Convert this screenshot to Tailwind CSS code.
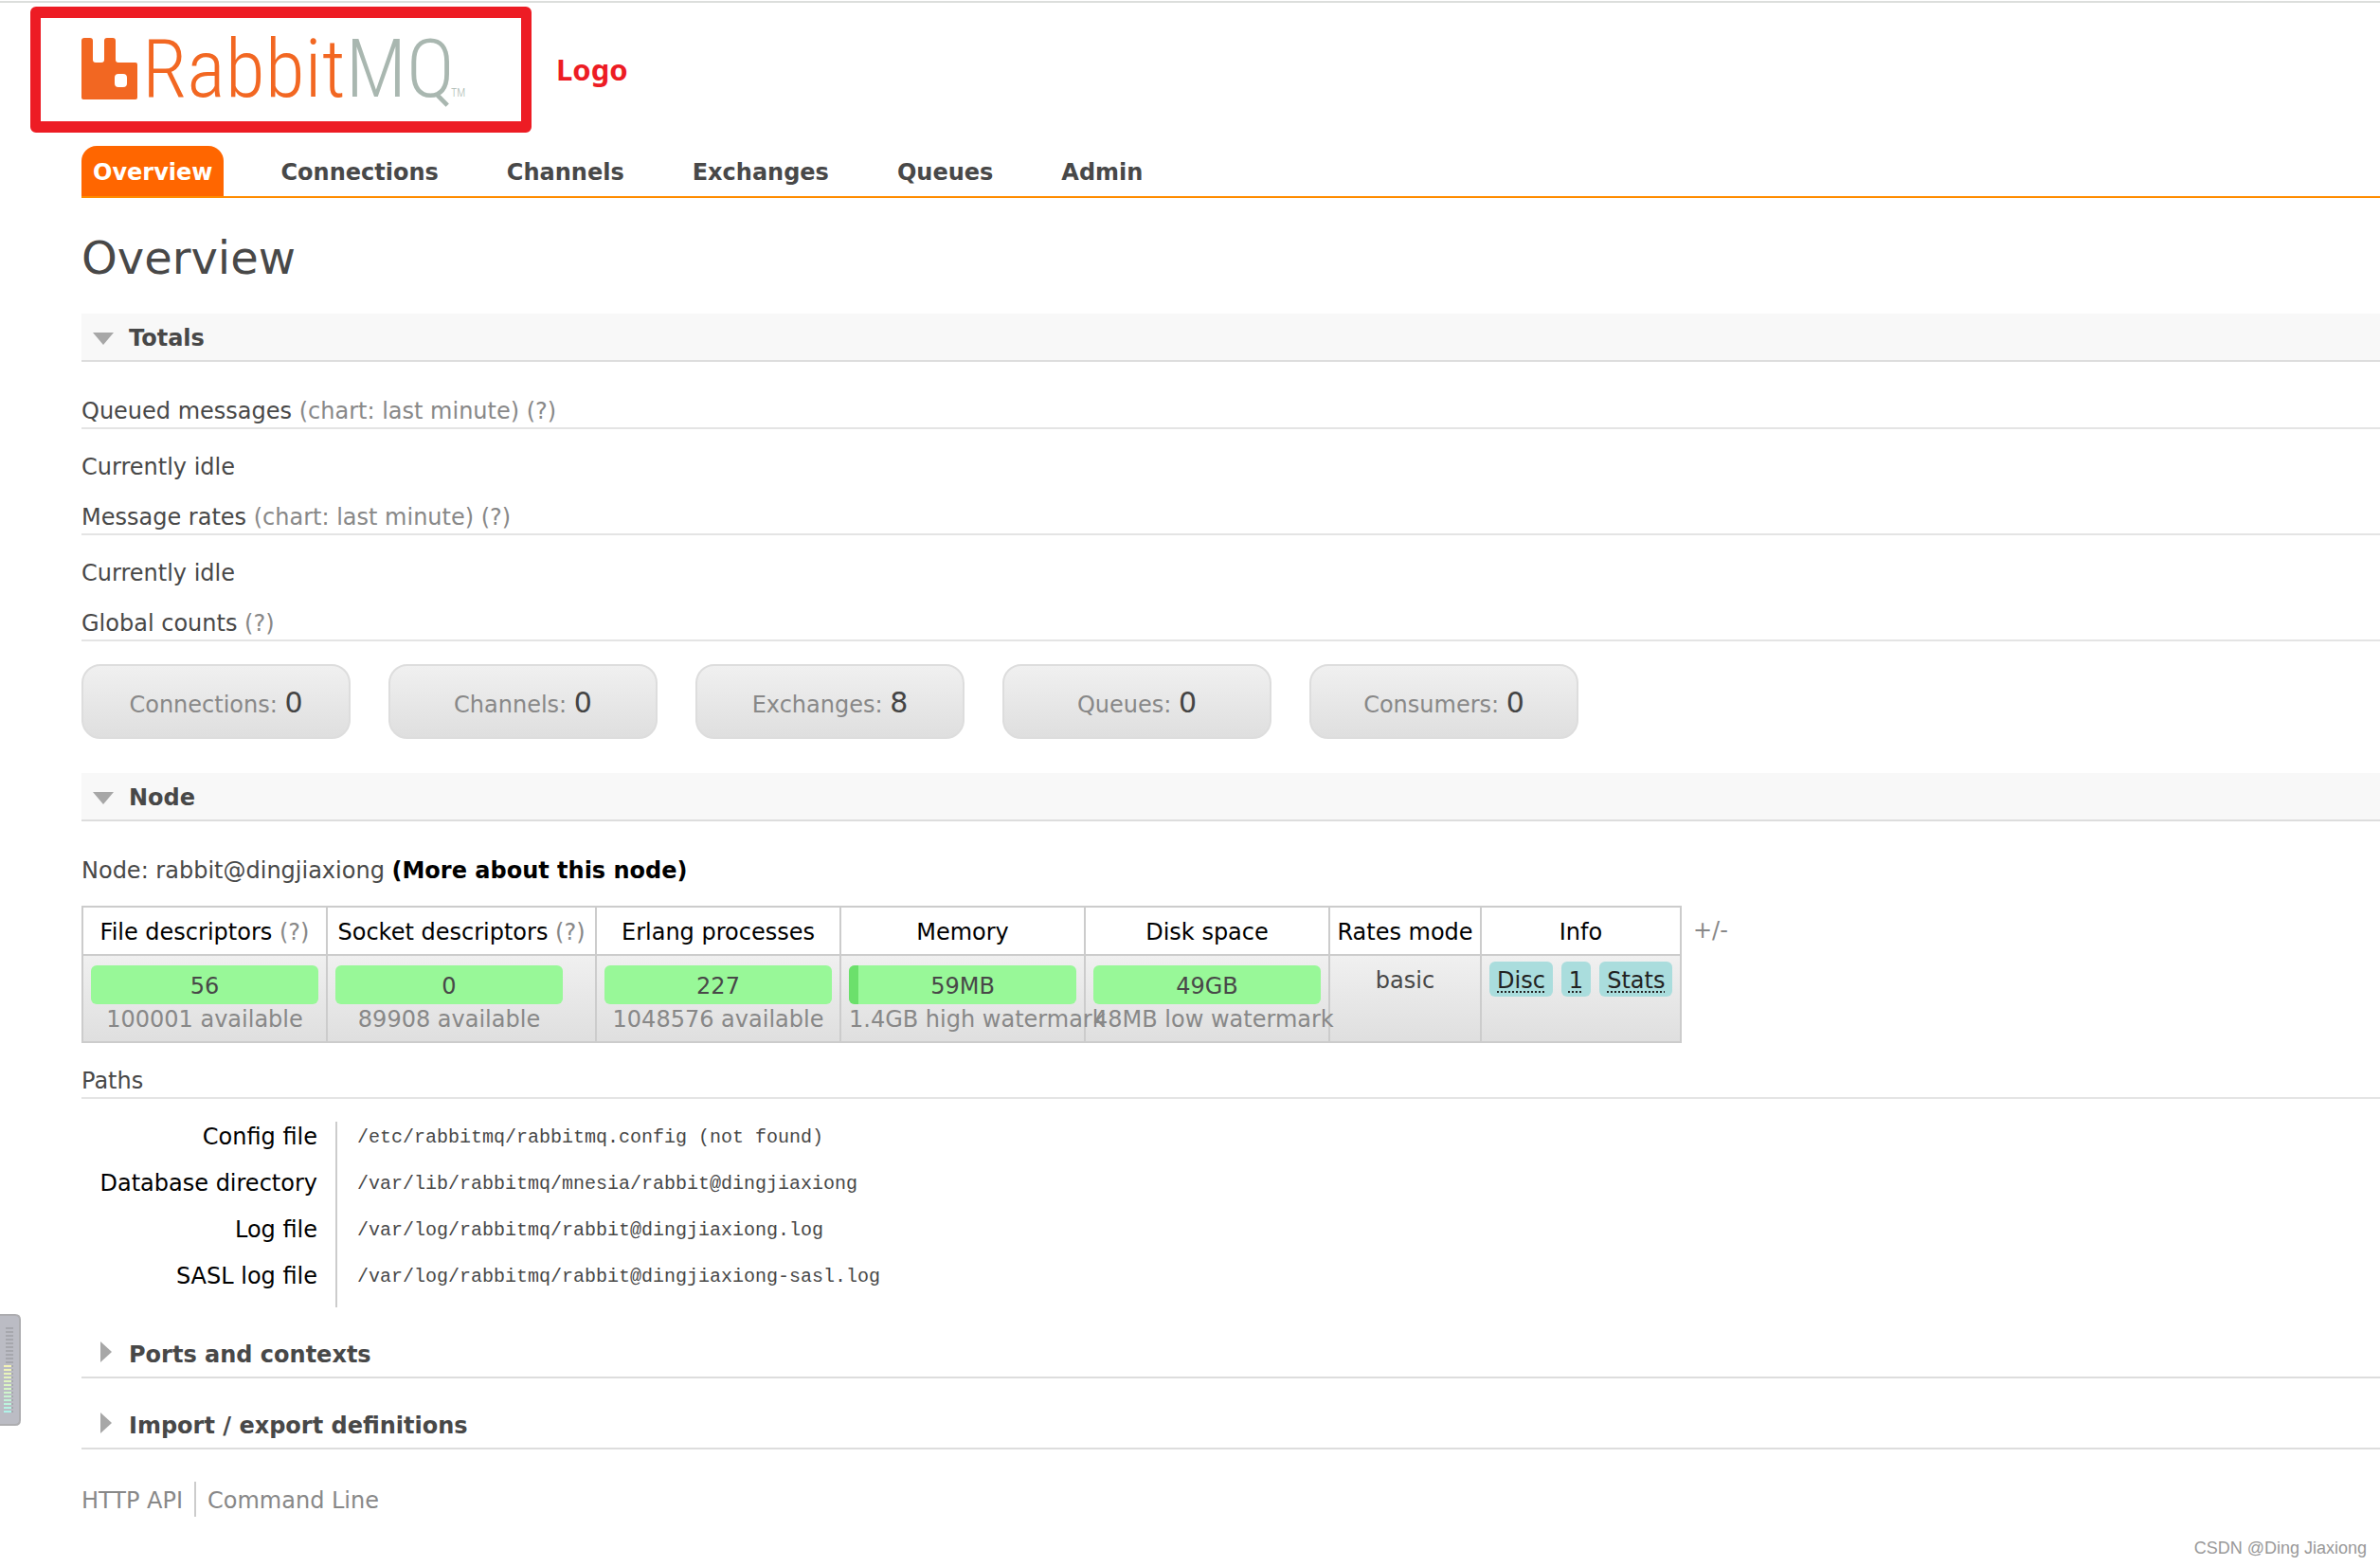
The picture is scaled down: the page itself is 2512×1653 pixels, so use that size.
<!DOCTYPE html>
<html lang="en">
<head>
<meta charset="utf-8">
<title>RabbitMQ Management</title>
<script src="https://cdn.jsdelivr.net/npm/@tailwindcss/browser@4"></script>
</head>
<body class="relative min-h-screen overflow-x-hidden bg-white pt-px font-['Verdana','DejaVu_Sans',sans-serif] text-[24px] leading-[28px] text-[#484848]">
<header class="border-t-2 border-[#dcdedc]">
  <div class="flex items-center gap-[26px] pl-8 pt-1">
    <a href="#" aria-label="RabbitMQ" class="flex h-[133px] w-[529px] rounded-md border-x-[11px] border-y-[12px] border-[#ed1c24] pl-[43px] pt-[20px]">
      <svg class="h-[84px] w-[420px] overflow-visible" viewBox="0 0 420 84">
        <path fill="#f26722" d="M0 4Q0 1 3 1H9Q12 1 12 4V24Q12 27 15 27H21Q24 27 24 24V4Q24 1 27 1H33Q36 1 36 4V24Q36 27 39 27H57Q59 27 59 29V64Q59 66 57 66H2Q0 66 0 64ZM39 39Q35 39 35 43V49Q35 53 39 53H44Q48 53 48 49V43Q48 39 44 39Z" fill-rule="evenodd"/>
        <text x="64" y="63" font-size="86" font-family="Roboto Condensed, Roboto, sans-serif" font-weight="300" fill="#f26722">Rabbit<tspan fill="#a9b7b0">MQ</tspan></text>
        <text x="390" y="63" font-size="12" font-family="Roboto Condensed, Roboto, sans-serif" font-weight="300" fill="#a9b7b0">TM</text>
      </svg>
    </a>
    <span class="pb-[2px] font-['Noto_Sans',sans-serif] text-[31px] font-bold leading-[40px] text-[#ed1c24]">Logo</span>
  </div>
  <nav class="ml-[86px] mt-[14px] flex gap-12 border-b-2 border-[#ff8c00] font-bold">
    <a href="#" class="rounded-t-2xl bg-[#ff6600] px-3 pb-[11px] pt-[14px] text-white">Overview</a>
    <a href="#" class="px-3 pb-[11px] pt-[14px]">Connections</a>
    <a href="#" class="px-3 pb-[11px] pt-[14px]">Channels</a>
    <a href="#" class="px-3 pb-[11px] pt-[14px]">Exchanges</a>
    <a href="#" class="px-3 pb-[11px] pt-[14px]">Queues</a>
    <a href="#" class="px-3 pb-[11px] pt-[14px]">Admin</a>
  </nav>
</header>

<main class="pl-[86px]">
  <h1 class="mt-[35px] text-[48px] leading-[56px]">Overview</h1>

  <section class="mt-[31px]">
    <h2><button class="flex w-full gap-4 border-b-2 border-[#dddddd] bg-[#f8f8f8] pb-[9px] pl-3 pt-3 text-left font-bold"><svg class="h-7 w-[22px]" viewBox="0 0 22 28"><path fill="#a7a7a7" d="M0 8H22L11 21Z"/></svg>Totals</button></h2>
    <h3 class="mt-[38px] border-b-2 border-[#e4e4e4] pb-[3px]">Queued messages <a href="#" class="text-[#888888]">(chart: last minute)</a> <a href="#" class="text-[#888888]">(?)</a></h3>
    <p class="mt-[26px]">Currently idle</p>
    <h3 class="mt-[25px] border-b-2 border-[#e4e4e4] pb-[3px]">Message rates <a href="#" class="text-[#888888]">(chart: last minute)</a> <a href="#" class="text-[#888888]">(?)</a></h3>
    <p class="mt-[26px]">Currently idle</p>
    <h3 class="mt-[25px] border-b-2 border-[#e4e4e4] pb-[3px]">Global counts <a href="#" class="text-[#888888]">(?)</a></h3>
    <div class="mt-6 flex gap-10 text-[#888888]">
      <div class="h-[79px] w-[284px] rounded-[20px] border-2 border-[#dddddd] bg-linear-to-b from-[#f0f0f0] to-[#dfdfdf] pt-[25px] text-center">Connections: <span class="text-[30px] text-[#444444]">0</span></div>
      <div class="h-[79px] w-[284px] rounded-[20px] border-2 border-[#dddddd] bg-linear-to-b from-[#f0f0f0] to-[#dfdfdf] pt-[25px] text-center">Channels: <span class="text-[30px] text-[#444444]">0</span></div>
      <div class="h-[79px] w-[284px] rounded-[20px] border-2 border-[#dddddd] bg-linear-to-b from-[#f0f0f0] to-[#dfdfdf] pt-[25px] text-center">Exchanges: <span class="text-[30px] text-[#444444]">8</span></div>
      <div class="h-[79px] w-[284px] rounded-[20px] border-2 border-[#dddddd] bg-linear-to-b from-[#f0f0f0] to-[#dfdfdf] pt-[25px] text-center">Queues: <span class="text-[30px] text-[#444444]">0</span></div>
      <div class="h-[79px] w-[284px] rounded-[20px] border-2 border-[#dddddd] bg-linear-to-b from-[#f0f0f0] to-[#dfdfdf] pt-[25px] text-center">Consumers: <span class="text-[30px] text-[#444444]">0</span></div>
    </div>
  </section>

  <section class="mt-9">
    <h2><button class="flex w-full gap-4 border-b-2 border-[#dddddd] bg-[#f8f8f8] pb-[9px] pl-3 pt-3 text-left font-bold"><svg class="h-7 w-[22px]" viewBox="0 0 22 28"><path fill="#a7a7a7" d="M0 8H22L11 21Z"/></svg>Node</button></h2>
    <p class="mt-[38px]">Node: rabbit@dingjiaxiong <a href="#" class="font-bold text-black">(More about this node)</a></p>
    <div class="mt-[23px] flex items-start gap-3">
      <table class="w-[1689px] table-fixed border-collapse whitespace-nowrap">
        <colgroup><col class="w-[258px]"><col class="w-[284px]"><col class="w-[258px]"><col class="w-[258px]"><col class="w-[258px]"><col class="w-[160px]"><col></colgroup>
        <thead>
          <tr class="text-black [&>th]:border-2 [&>th]:border-[#cccccc] [&>th]:pb-[9px] [&>th]:pt-3 [&>th]:font-normal">
            <th>File descriptors <a href="#" class="text-[#888888]">(?)</a></th>
            <th>Socket descriptors <a href="#" class="text-[#888888]">(?)</a></th>
            <th>Erlang processes</th><th>Memory</th><th>Disk space</th><th>Rates mode</th><th>Info</th>
          </tr>
        </thead>
        <tbody>
          <tr class="[&>td]:border-2 [&>td]:border-[#cccccc] [&>td]:bg-linear-to-b [&>td]:from-[#f0f0f0] [&>td]:to-[#dfdfdf] [&>td]:px-2 [&>td]:align-top">
            <td class="pb-[9px] pt-[10px]"><div class="w-[240px] text-center"><div class="h-[41px] rounded-md bg-[#98f898] pt-2">56</div><div class="pt-[2px] text-[#888888]">100001 available</div></div></td>
            <td class="pb-[9px] pt-[10px]"><div class="w-[240px] text-center"><div class="h-[41px] rounded-md bg-[#98f898] pt-2">0</div><div class="pt-[2px] text-[#888888]">89908 available</div></div></td>
            <td class="pb-[9px] pt-[10px]"><div class="w-[240px] text-center"><div class="h-[41px] rounded-md bg-[#98f898] pt-2">227</div><div class="pt-[2px] text-[#888888]">1048576 available</div></div></td>
            <td class="pb-[9px] pt-[10px]"><div class="w-[240px] text-center"><div class="grid h-[41px] overflow-hidden rounded-md bg-[#98f898]"><div class="col-start-1 row-start-1 bg-[#6be06b]" style="width:4.2%"></div><div class="col-start-1 row-start-1 pt-2">59MB</div></div><div class="pt-[2px] text-[#888888]">1.4GB high watermark</div></div></td>
            <td class="pb-[9px] pt-[10px]"><div class="w-[240px] text-center"><div class="h-[41px] rounded-md bg-[#98f898] pt-2">49GB</div><div class="pt-[2px] text-[#888888]">48MB low watermark</div></div></td>
            <td class="pt-3 text-center">basic</td>
            <td class="pt-[6px]"><div class="flex gap-[9px] text-[#222222]">
              <span class="rounded-md bg-[#aadddd] px-2 pb-[3px] pt-[6px]"><abbr class="underline decoration-dotted decoration-2 underline-offset-[3px]">Disc</abbr></span>
              <span class="rounded-md bg-[#aadddd] px-2 pb-[3px] pt-[6px]"><abbr class="underline decoration-dotted decoration-2 underline-offset-[3px]">1</abbr></span>
              <span class="rounded-md bg-[#aadddd] px-2 pb-[3px] pt-[6px]"><abbr class="underline decoration-dotted decoration-2 underline-offset-[3px]">Stats</abbr></span>
            </div></td>
          </tr>
        </tbody>
      </table>
      <button class="pt-3 text-[#888888]">+/-</button>
    </div>

    <h3 class="mt-[26px] border-b-2 border-[#e4e4e4] pb-[3px]">Paths</h3>
    <table class="mt-6 [&_td]:h-[49px] [&_td]:pl-[21px] [&_td]:pt-[3px] [&_td]:align-top [&_td]:font-['Liberation_Mono',monospace] [&_td]:text-[20px] [&_th]:h-[49px] [&_th]:w-[269px] [&_th]:border-r-2 [&_th]:border-[#cccccc] [&_th]:pr-[19px] [&_th]:pt-[2px] [&_th]:text-right [&_th]:align-top [&_th]:font-normal [&_th]:text-black">
      <tr><th>Config file</th><td>/etc/rabbitmq/rabbitmq.config (not found)</td></tr>
      <tr><th>Database directory</th><td>/var/lib/rabbitmq/mnesia/rabbit@dingjiaxiong</td></tr>
      <tr><th>Log file</th><td>/var/log/rabbitmq/rabbit@dingjiaxiong.log</td></tr>
      <tr><th>SASL log file</th><td>/var/log/rabbitmq/rabbit@dingjiaxiong-sasl.log</td></tr>
    </table>
  </section>

  <h2 class="mt-6"><button class="flex w-full gap-4 border-b-2 border-[#dddddd] pb-[9px] pl-3 pt-3 text-left font-bold"><svg class="h-7 w-[22px]" viewBox="0 0 22 28"><path fill="#a7a7a7" d="M8 0L20 11L8 22Z"/></svg>Ports and contexts</button></h2>
  <h2 class="mt-6"><button class="flex w-full gap-4 border-b-2 border-[#dddddd] pb-[9px] pl-3 pt-3 text-left font-bold"><svg class="h-7 w-[22px]" viewBox="0 0 22 28"><path fill="#a7a7a7" d="M8 0L20 11L8 22Z"/></svg>Import / export definitions</button></h2>
</main>

<footer class="ml-[86px] mt-[34px] flex text-[#888888]">
  <a href="#" class="border-r-2 border-[#cccccc] pb-[3px] pr-3 pt-[6px]">HTTP API</a>
  <a href="#" class="pl-3 pt-[6px]">Command Line</a>
</footer>

<svg class="absolute left-0 top-[1386px] h-[120px] w-6" viewBox="0 0 24 120" aria-hidden="true">
  <defs>
    <linearGradient id="level" x1="0" y1="0" x2="0" y2="1"><stop offset="0" stop-color="#f5f3b5"/><stop offset=".5" stop-color="#d5f5c5"/><stop offset="1" stop-color="#aef3ea"/></linearGradient>
    <pattern id="ticks" width="24" height="4" patternUnits="userSpaceOnUse" y="15"><rect width="24" height="2" fill="#fff"/></pattern>
    <mask id="rows"><rect width="24" height="120" fill="url(#ticks)"/></mask>
  </defs>
  <path fill="#bbbcc4" stroke="#adadb0" stroke-width="2" d="M-2 2H16Q21 2 21 7V113Q21 118 16 118H-2Z"/>
  <rect x="6" y="15" width="8" height="90" fill="#a6a7ad" mask="url(#rows)"/>
  <rect x="4" y="55" width="8" height="50" fill="url(#level)" mask="url(#rows)"/>
</svg>
<div class="absolute bottom-2 right-[14px] font-['Liberation_Sans',sans-serif] text-[18px] leading-[22px] text-[#999999]">CSDN @Ding Jiaxiong</div>
</body>
</html>
